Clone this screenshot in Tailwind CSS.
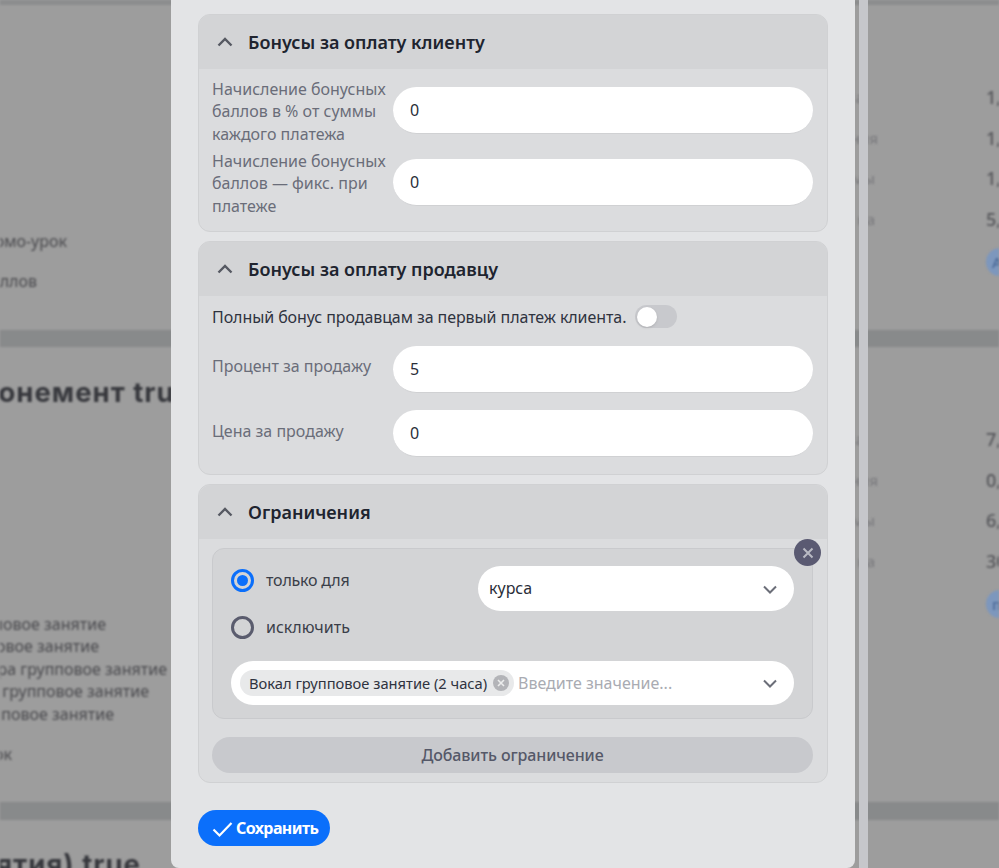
<!DOCTYPE html>
<html lang="en">
<head>
  <meta charset="UTF-8" />
  <meta name="viewport" content="width=device-width, initial-scale=1.0"/>
  <title>Абонемент</title>
  <script src="https://cdn.jsdelivr.net/npm/@tailwindcss/browser@4"></script>
</head>
<body class="h-screen overflow-hidden bg-[#9d9d9d] font-['Noto_Sans','Open_Sans',sans-serif]">

  <div class="relative h-[868px] w-[999px] overflow-hidden">

    <!-- Page behind the modal -->
    <div class="h-full flex flex-col blur-[1.2px] text-[#4a4a4e] text-[16px] leading-[22.4px]">
      <div class="h-[5px] shrink-0 bg-[#8c8d8e]"></div>

      <div class="h-[325px] shrink-0 flex justify-between">
        <div class="pt-[225px] flex flex-col gap-[18px]">
          <div class="w-[67px] flex justify-end overflow-hidden whitespace-nowrap">промо-урок</div>
          <div class="w-[37px] flex justify-end overflow-hidden whitespace-nowrap">баллов</div>
        </div>
        <div class="flex">
          <div class="pt-[81px] flex flex-col gap-[18px] w-[131px] text-[#77777b] text-[15px]">
            <div class="h-[22.5px] w-[9px] flex justify-end overflow-hidden whitespace-nowrap">а</div>
            <div class="h-[22.5px] w-[23px] flex justify-end overflow-hidden whitespace-nowrap">ния</div>
            <div class="h-[22.5px] w-[20px] flex justify-end overflow-hidden whitespace-nowrap">мы</div>
            <div class="h-[22.5px] w-[20px] flex justify-end overflow-hidden whitespace-nowrap">на</div>
          </div>
          <div class="pt-[81px] w-[13px] font-medium text-[18px] leading-[22.5px] flex flex-col gap-[18px] overflow-hidden text-[#55565a]">
            <div>1,</div><div>1,</div><div>1,</div><div>5,</div>
            <div class="shrink-0 w-[28px] h-[28px] rounded-full bg-[#7d97bd] pl-[6px] text-[15px] leading-[28px] text-[#4a6896]">А</div>
          </div>
        </div>
      </div>

      <div class="h-[17px] shrink-0 bg-[#888a8b]"></div>

      <div class="h-[455px] shrink-0 flex justify-between">
        <div class="flex flex-col">
          <div class="w-[192px] flex justify-end overflow-hidden whitespace-nowrap pt-[27px] font-['Inter',sans-serif] font-bold text-[27.5px] tracking-[1px] leading-[36px] text-[#37383d]">Абонемент true</div>
          <div class="mt-[203px] flex flex-col">
            <div class="w-[106px] flex justify-end overflow-hidden whitespace-nowrap">групповое занятие</div>
            <div class="w-[99px] flex justify-end overflow-hidden whitespace-nowrap">групповое занятие</div>
            <div class="w-[167px] flex justify-end overflow-hidden whitespace-nowrap">Гитара групповое занятие</div>
            <div class="w-[149px] flex justify-end overflow-hidden whitespace-nowrap">Вокал групповое занятие</div>
            <div class="w-[114px] flex justify-end overflow-hidden whitespace-nowrap">групповое занятие</div>
            <div class="w-[12px] mt-[18px] flex justify-end overflow-hidden whitespace-nowrap">урок</div>
          </div>
        </div>
        <div class="flex">
          <div class="pt-[81px] flex flex-col gap-[18px] w-[131px] text-[#77777b] text-[15px]">
            <div class="h-[22.5px] w-[9px] flex justify-end overflow-hidden whitespace-nowrap">а</div>
            <div class="h-[22.5px] w-[23px] flex justify-end overflow-hidden whitespace-nowrap">ния</div>
            <div class="h-[22.5px] w-[20px] flex justify-end overflow-hidden whitespace-nowrap">мы</div>
            <div class="h-[22.5px] w-[20px] flex justify-end overflow-hidden whitespace-nowrap">на</div>
          </div>
          <div class="pt-[81px] w-[13px] font-medium text-[18px] leading-[22.5px] flex flex-col gap-[18px] overflow-hidden text-[#55565a]">
            <div>7,</div><div>0,</div><div>6,</div><div>30</div>
            <div class="shrink-0 w-[28px] h-[28px] rounded-full bg-[#7d97bd] pl-[6px] text-[15px] leading-[28px] text-[#4a6896]">п</div>
          </div>
        </div>
      </div>

      <div class="h-[18px] shrink-0 bg-[#888a8b]"></div>

      <div class="flex-1 min-h-0">
        <div class="w-[141px] flex justify-end overflow-hidden whitespace-nowrap pt-[26px] font-['Inter',sans-serif] font-bold text-[27.5px] tracking-[1px] leading-[36px] text-[#37383d]">занятия) true</div>
      </div>
    </div>

    <!-- Modal -->
    <div class="absolute inset-0 flex pl-[171px]">
      <div class="w-[684px] h-full overflow-hidden bg-[#e3e4e6] rounded-b-lg px-[27px] pt-[14px] flex flex-col">

        <!-- Bonuses for client -->
        <section class="h-[218px] shrink-0 rounded-xl border border-[#d0d1d3] bg-[#dbdcde] overflow-hidden">
          <div class="h-[54px] bg-[#d3d4d6] flex items-center pl-[18px] gap-[15px]">
            <svg class="w-[16px] h-[16px] text-[#565962]" viewBox="0 0 16 16" fill="none" stroke="currentColor" stroke-width="2.4"><path d="M1.5 11.5 8 5 14.5 11.5"/></svg>
            <span class="text-[18px] font-semibold text-[#20242f] leading-none">Бонусы за оплату клиенту</span>
          </div>
          <div class="pl-[13px] pr-[13px] pt-[9px] flex flex-col gap-[4.8px]">
            <div class="flex items-start">
              <div class="w-[181px] shrink-0 pr-[4px] text-[16px] leading-[22.4px] text-[#6a6d79]">Начисление бонусных баллов в % от суммы каждого платежа</div>
              <input value="0" class="mt-[9px] w-[420px] h-[47px] rounded-full bg-white border-b border-[#d0d1d3] pl-[17px] text-[16px] text-[#2a2e39] outline-none" />
            </div>
            <div class="flex items-start">
              <div class="w-[181px] shrink-0 pr-[4px] text-[16px] leading-[22.4px] text-[#6a6d79]">Начисление бонусных баллов — фикс. при платеже</div>
              <input value="0" class="mt-[9px] w-[420px] h-[47px] rounded-full bg-white border-b border-[#d0d1d3] pl-[17px] text-[16px] text-[#2a2e39] outline-none" />
            </div>
          </div>
        </section>

        <!-- Bonuses for seller -->
        <section class="mt-[9px] h-[234px] shrink-0 rounded-xl border border-[#d0d1d3] bg-[#dbdcde] overflow-hidden">
          <div class="h-[54px] bg-[#d3d4d6] flex items-center pl-[18px] gap-[15px]">
            <svg class="w-[16px] h-[16px] text-[#565962]" viewBox="0 0 16 16" fill="none" stroke="currentColor" stroke-width="2.4"><path d="M1.5 11.5 8 5 14.5 11.5"/></svg>
            <span class="text-[18px] font-semibold text-[#20242f] leading-none">Бонусы за оплату продавцу</span>
          </div>
          <div class="pl-[13px] pr-[13px] pt-[9px]">
            <div class="flex items-center h-[23px]">
              <span class="text-[16px] tracking-[-0.08px] text-[#2f333e] whitespace-nowrap">Полный бонус продавцам за первый платеж клиента.</span>
              <span class="ml-[9px] relative w-[42px] h-[23px] rounded-full bg-[#c8c9cd]">
                <span class="absolute left-[1.5px] top-[1.5px] w-[20px] h-[20px] rounded-full bg-white shadow-sm"></span>
              </span>
            </div>
            <div class="mt-[18px] flex items-start">
              <div class="w-[181px] shrink-0 pt-[9px] text-[16px] leading-[22.4px] text-[#6a6d79]">Процент за продажу</div>
              <input value="5" class="w-[420px] h-[47px] rounded-full bg-white border-b border-[#d0d1d3] pl-[17px] text-[16px] text-[#2a2e39] outline-none" />
            </div>
            <div class="mt-[17px] flex items-start">
              <div class="w-[181px] shrink-0 pt-[10px] text-[16px] leading-[22.4px] text-[#6a6d79]">Цена за продажу</div>
              <input value="0" class="w-[420px] h-[47px] rounded-full bg-white border-b border-[#d0d1d3] pl-[17px] text-[16px] text-[#2a2e39] outline-none" />
            </div>
          </div>
        </section>

        <!-- Restrictions -->
        <section class="mt-[9px] h-[299px] shrink-0 rounded-xl border border-[#d0d1d3] bg-[#dbdcde]">
          <div class="h-[54px] rounded-t-xl bg-[#d3d4d6] flex items-center pl-[18px] gap-[15px]">
            <svg class="w-[16px] h-[16px] text-[#565962]" viewBox="0 0 16 16" fill="none" stroke="currentColor" stroke-width="2.4"><path d="M1.5 11.5 8 5 14.5 11.5"/></svg>
            <span class="text-[18px] font-semibold text-[#20242f] leading-none">Ограничения</span>
          </div>
          <div class="pl-[13px] pr-[14px] pt-[9px]">
            <div class="relative h-[171px] rounded-xl border border-[#c9cacd] bg-[#d3d4d6] px-[18px] pt-[17px]">
              <button class="absolute -right-[9px] -top-[10px] w-[27px] h-[27px] rounded-full bg-[#5a5a72] flex items-center justify-center">
                <svg class="w-[12px] h-[12px] text-[#b9bac4]" viewBox="0 0 12 12" fill="none" stroke="currentColor" stroke-width="2"><path d="M1.5 1.5l9 9M10.5 1.5l-9 9"/></svg>
              </button>
              <div class="flex justify-between h-[78px]">
                <div class="flex flex-col gap-[24px] pt-[3px]">
                  <label class="flex items-center gap-[12px] h-[23px] text-[16px] text-[#3a3e49]">
                    <span class="w-[23px] h-[23px] rounded-full border-[3px] border-[#0b6ffb] flex items-center justify-center">
                      <span class="w-[11px] h-[11px] rounded-full bg-[#0b6ffb]"></span>
                    </span>
                    <span class="-mt-[2px] tracking-[-0.2px]">только для</span>
                  </label>
                  <label class="flex items-center gap-[12px] h-[23px] text-[16px] text-[#3a3e49]">
                    <span class="w-[23px] h-[23px] rounded-full border-[3px] border-[#5a5c6e]"></span>
                    <span class="-mt-[2px]">исключить</span>
                  </label>
                </div>
                <div class="w-[316px] h-[45px] rounded-full bg-white pl-[11px] pr-[16px] flex items-center justify-between text-[16px] text-[#2a2e39]">
                  <span class="-mt-[2px]">курса</span>
                  <svg class="w-[16px] h-[16px] text-[#6b6e78]" viewBox="0 0 16 16" fill="none" stroke="currentColor" stroke-width="2"><path d="M2 5.5 8 11.5 14 5.5"/></svg>
                </div>
              </div>
              <div class="mt-[17px] h-[44px] rounded-full bg-white pl-[9px] pr-[16px] flex items-center">
                <span class="w-[274px] h-[26px] rounded-full bg-[#e8e9ea] pl-[9px] pr-[5px] flex items-center justify-between text-[14.7px] text-[#2f3340] whitespace-nowrap">
                  Вокал групповое занятие (2 часа)
                  <svg class="w-[16px] h-[16px]" viewBox="0 0 16 16" fill="none"><circle cx="8" cy="8" r="8" fill="#b3b4b8"/><path d="M5 5l6 6M11 5l-6 6" stroke="#eceded" stroke-width="1.6"/></svg>
                </span>
                <span class="ml-[4px] -mt-[1px] text-[16px] text-[#a9abb2] whitespace-nowrap">Введите значение...</span>
                <svg class="ml-auto w-[16px] h-[16px] text-[#6b6e78]" viewBox="0 0 16 16" fill="none" stroke="currentColor" stroke-width="2"><path d="M2 5.5 8 11.5 14 5.5"/></svg>
              </div>
            </div>
            <button class="mt-[18px] w-full h-[36px] rounded-full bg-[#c8c9cd] text-[16px] font-medium tracking-[-0.1px] text-[#555868]">Добавить ограничение</button>
          </div>
        </section>

        <div class="mt-[27px]">
          <button class="w-[132px] h-[36px] rounded-full bg-[#0b6ffb] pl-[14px] flex items-center gap-[3px] text-[16px] font-bold tracking-[-0.6px] text-white">
            <svg class="w-[21px] h-[21px]" viewBox="0 0 21 21" fill="none" stroke="currentColor" stroke-width="2.2"><path d="M1.5 11.5 7.5 17.5 19.5 5"/></svg>
            Сохранить
          </button>
        </div>
      </div>

      <!-- Scroll strip -->
      <div class="ml-[4px] w-[9px] h-full bg-[#c6c7cb]"></div>
    </div>
  </div>
</body>
</html>
